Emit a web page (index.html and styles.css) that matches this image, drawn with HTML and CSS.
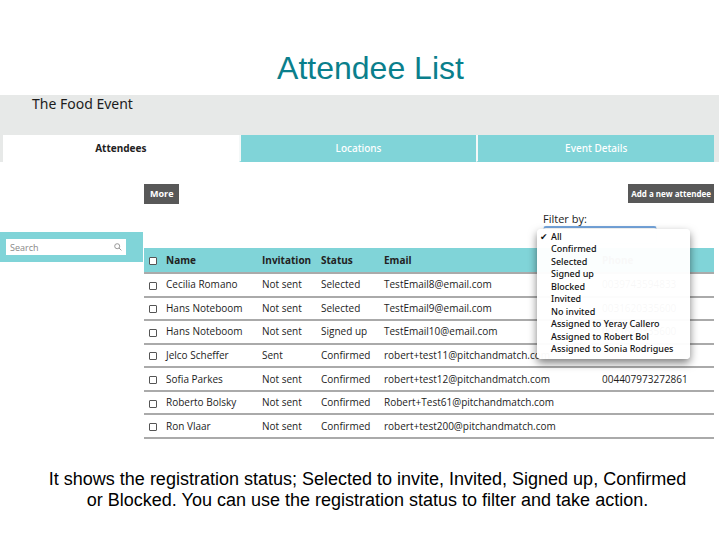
FILE: index.html
```html
<!DOCTYPE html>
<html lang="en">

<head>
    <meta charset="UTF-8">
    <meta name="viewport" content="width=device-width, initial-scale=1.0">
    <title>Attendee List</title>
    <link rel="stylesheet" href="styles.css">
</head>

<body>
    <h1>Attendee List</h1>

    <header class="event-header">
        <h2>The Food Event</h2>
        <nav class="tabs">
            <a href="#attendees" class="tab active">Attendees</a>
            <a href="#locations" class="tab">Locations</a>
            <a href="#details" class="tab">Event Details</a>
        </nav>
    </header>

    <div class="content">
        <!-- Search -->
        <aside class="sidebar">
            <form class="search-box">
                <div class="search-field">
                    <input type="text" id="search" placeholder="Search" aria-label="Search">
                    <svg class="search-icon" viewBox="0 0 8 8" aria-hidden="true">
                        <circle cx="3.2" cy="3.2" r="2.5" />
                        <path d="M5 5 L7.4 7.4" />
                    </svg>
                </div>
            </form>
        </aside>

        <main class="main">
            <div class="toolbar">
                <button type="button" class="more">More</button>
                <button type="button" class="add">Add a new attendee</button>
            </div>

            <!-- Status filter -->
            <div class="filter">
                <label for="status">Filter by:</label>
                <select id="status">
                    <option>All</option>
                </select>
                <ul class="menu" role="listbox" aria-label="Filter by">
                    <li role="option" aria-selected="true">All</li>
                    <li role="option">Confirmed</li>
                    <li role="option">Selected</li>
                    <li role="option">Signed up</li>
                    <li role="option">Blocked</li>
                    <li role="option">Invited</li>
                    <li role="option">No invited</li>
                    <li role="option">Assigned to Yeray Callero</li>
                    <li role="option">Assigned to Robert Bol</li>
                    <li role="option">Assigned to Sonia Rodrigues</li>
                </ul>
            </div>

            <table class="attendees">
                <colgroup>
                    <col class="col-check">
                    <col class="col-name">
                    <col class="col-invitation">
                    <col class="col-status">
                    <col class="col-email">
                    <col>
                </colgroup>
                <thead>
                    <tr>
                        <th><input type="checkbox" aria-label="Select all"></th>
                        <th>Name</th>
                        <th>Invitation</th>
                        <th>Status</th>
                        <th>Email</th>
                        <th>Phone</th>
                    </tr>
                </thead>
                <tbody>
                    <tr>
                        <td><input type="checkbox" aria-label="Select Cecilia Romano"></td>
                        <td>Cecilia Romano</td>
                        <td>Not sent</td>
                        <td>Selected</td>
                        <td>TestEmail8@email.com</td>
                        <td>0039743594833</td>
                    </tr>
                    <tr>
                        <td><input type="checkbox" aria-label="Select Hans Noteboom"></td>
                        <td>Hans Noteboom</td>
                        <td>Not sent</td>
                        <td>Selected</td>
                        <td>TestEmail9@email.com</td>
                        <td>0031620335600</td>
                    </tr>
                    <tr>
                        <td><input type="checkbox" aria-label="Select Hans Noteboom"></td>
                        <td>Hans Noteboom</td>
                        <td>Not sent</td>
                        <td>Signed up</td>
                        <td>TestEmail10@email.com</td>
                        <td>0031620335600</td>
                    </tr>
                    <tr>
                        <td><input type="checkbox" aria-label="Select Jelco Scheffer"></td>
                        <td>Jelco Scheffer</td>
                        <td>Sent</td>
                        <td>Confirmed</td>
                        <td>robert+test11@pitchandmatch.com</td>
                        <td></td>
                    </tr>
                    <tr>
                        <td><input type="checkbox" aria-label="Select Sofia Parkes"></td>
                        <td>Sofia Parkes</td>
                        <td>Not sent</td>
                        <td>Confirmed</td>
                        <td>robert+test12@pitchandmatch.com</td>
                        <td>004407973272861</td>
                    </tr>
                    <tr>
                        <td><input type="checkbox" aria-label="Select Roberto Bolsky"></td>
                        <td>Roberto Bolsky</td>
                        <td>Not sent</td>
                        <td>Confirmed</td>
                        <td>Robert+Test61@pitchandmatch.com</td>
                        <td></td>
                    </tr>
                    <tr>
                        <td><input type="checkbox" aria-label="Select Ron Vlaar"></td>
                        <td>Ron Vlaar</td>
                        <td>Not sent</td>
                        <td>Confirmed</td>
                        <td>robert+test200@pitchandmatch.com</td>
                        <td></td>
                    </tr>
                </tbody>
            </table>
        </main>
    </div>

    <p class="caption">It shows the registration status; Selected to invite, Invited, Signed up, Confirmed<br>or Blocked. You can use the registration status to filter and take action.</p>
</body>

</html>
```
FILE: styles.css
```css
* {
    box-sizing: border-box;
}

body {
    margin: 0;
    background-color: #fff;
    color: #1c1c1c;
    font-family: "Open Sans", "Noto Sans", sans-serif;
    font-size: 10px;
}

h1 {
    margin: 0;
    padding: 48px 0 7px 22px;
    color: #0a7f8c;
    font: 32px/40px "Liberation Sans", Arial, sans-serif;
    text-align: center;
}

.event-header {
    background-color: #e7e9e8;
}

h2 {
    margin: 0;
    padding: 0 32px;
    height: 40px;
    font-family: "Noto Sans", sans-serif;
    font-size: 14px;
    font-weight: normal;
    line-height: 18px;
}

.tabs {
    display: flex;
    padding: 0 5px 0 3px;
}

.tab {
    flex: 1;
    background-color: #80d4d8;
    color: #fff;
    font-family: "Noto Sans", sans-serif;
    font-weight: 500;
    line-height: 26px;
    text-align: center;
    text-decoration: none;
    border-bottom: 1px solid #80d4d8;
}

.tab + .tab {
    border-left: 2px solid #f4f8f8;
}

.tab.active {
    background-color: #fff;
    border-color: #fff;
    color: #222;
    font-weight: bold;
}

.content {
    display: flex;
    gap: 1px;
    padding: 22px 5px 0 0;
}

/* Search */
.sidebar {
    flex: 0 0 143px;
    min-width: 0;
    padding-top: 48px;
}

.search-box {
    padding: 7px 17px 7px 6px;
    background-color: #80d4d8;
}

.search-field {
    display: flex;
    align-items: center;
    height: 16px;
    padding: 0 4px;
    background-color: #fff;
}

.search-field input {
    flex: 1;
    min-width: 0;
    width: 100%;
    padding: 0;
    border: none;
    outline: none;
    background: none;
    font: inherit;
    font-size: 9px;
}

.search-field input::placeholder {
    color: #888;
}

.search-icon {
    flex: none;
    width: 8px;
    height: 8px;
    fill: none;
    stroke: #999;
}

.main {
    flex: 1;
    min-width: 0;
}

.toolbar {
    display: flex;
    justify-content: space-between;
    align-items: flex-start;
    height: 27px;
}

button {
    padding: 0 6px;
    border: none;
    background-color: #585858;
    color: #fff;
    font: bold 9px/20px "Open Sans", "Noto Sans", sans-serif;
    white-space: nowrap;
    cursor: pointer;
}

.add {
    padding: 0 3px;
    font-size: 8px;
    line-height: 19px;
}

/* Status filter */
.filter {
    position: relative;
    display: flex;
    flex-direction: column;
    width: 114px;
    height: 37px;
    margin: 0 57px 0 auto;
}

.filter label {
    font-size: 11px;
    line-height: 15px;
}

.filter select {
    appearance: none;
    height: 18px;
    padding: 0 4px;
    border: 1px solid #dde8f4;
    border-top: 2px solid #74a5dc;
    border-radius: 3px;
    background-color: #fff;
    font: inherit;
    color: transparent;
}

.menu {
    position: absolute;
    top: 18px;
    left: -6px;
    display: flex;
    flex-direction: column;
    justify-content: space-between;
    width: 153px;
    height: 130px;
    margin: 0;
    padding: 2px 0 4px;
    border-radius: 4px;
    background-color: rgba(255, 255, 255, 0.97);
    box-shadow: 0 4px 9px rgba(0, 0, 0, 0.5);
    color: #111;
    font-family: "Noto Sans", sans-serif;
    font-size: 9px;
    font-weight: 500;
    line-height: 12px;
    list-style: none;
}

.menu li {
    padding-left: 14px;
    white-space: nowrap;
}

.menu li[aria-selected="true"]::before {
    content: "✔";
    display: inline-block;
    width: 11px;
    margin-left: -11px;
    font-family: "DejaVu Sans", sans-serif;
}

/* Attendees */
.attendees {
    width: 100%;
    height: 191px;
    table-layout: fixed;
    border-collapse: collapse;
}

.col-check {
    width: 22px;
}

.col-name {
    width: 96px;
}

.col-invitation {
    width: 59px;
}

.col-status {
    width: 63px;
}

.col-email {
    width: 218px;
}

th,
td {
    padding: 0 0 1px;
    border-bottom: 2px solid #aaa;
    line-height: 14px;
    text-align: left;
    white-space: nowrap;
}

th {
    height: 25px;
    background-color: #80d4d8;
    color: #222;
}

input[type="checkbox"] {
    appearance: none;
    display: block;
    width: 8px;
    height: 8px;
    margin: 3px 0 0 5px;
    border: 1px solid #555;
    border-radius: 1px;
    background-color: #fff;
}

.caption {
    margin: 0;
    padding: 30px 0 24px 16px;
    color: #000;
    font: 18px/21px "Liberation Sans", Arial, sans-serif;
    text-align: center;
}
```
